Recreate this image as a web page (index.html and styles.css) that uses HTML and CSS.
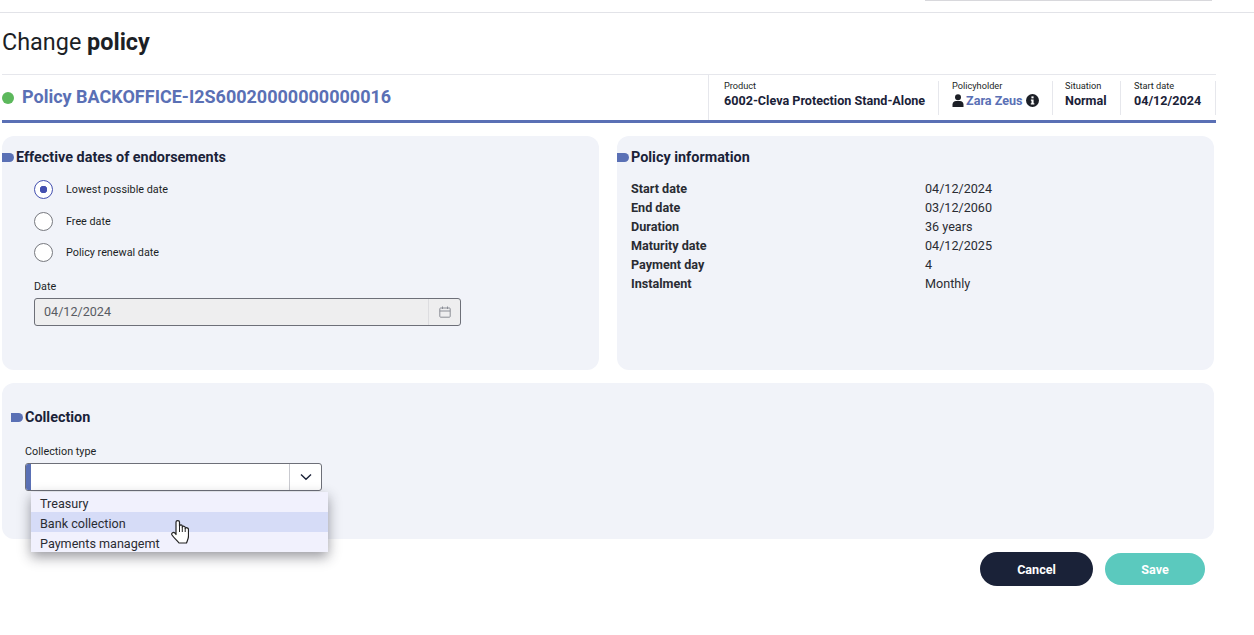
FILE: index.html
```html
<!DOCTYPE html>
<html>

<head>
	<meta charset="utf-8" />
	<title>Change policy</title>
	<link rel="stylesheet" href="styles.css">
</head>

<body>
	<div class="topbar"><div class="topbar-search"></div></div>
	<div class="page">
		<h1 class="title">Change <b>policy</b></h1>

		<div class="summary">
			<div class="summary-name"><span class="dot"></span><span class="name-text">Policy BACKOFFICE-I2S60020000000000016</span></div>
			<div class="summary-cell cell-product">
				<span class="cell-label">Product</span>
				<span class="cell-value">6002-Cleva Protection Stand-Alone</span>
			</div>
			<div class="summary-cell cell-holder">
				<span class="cell-label">Policyholder</span>
				<span class="cell-value holder">
					<svg class="icon-user" viewBox="0 0 12 13" width="12" height="13"><circle cx="6" cy="3.2" r="3" fill="#1c1f26"/><path d="M0.5 13V10.5C0.5 8.3 2.2 7 4 7H8C9.8 7 11.5 8.3 11.5 10.5V13Z" fill="#1c1f26"/></svg>
					<span class="holder-name">Zara Zeus</span>
					<svg class="icon-info" viewBox="0 0 12 12" width="13" height="13"><circle cx="6" cy="6" r="6" fill="#1c1f26"/><rect x="5" y="2.2" width="2" height="1.8" fill="#fff"/><path d="M4.5 5H7V8.6H7.7V9.8H4.4V8.6H5.1V6.2H4.5Z" fill="#fff"/></svg>
				</span>
			</div>
			<div class="summary-cell cell-situation">
				<span class="cell-label">Situation</span>
				<span class="cell-value">Normal</span>
			</div>
			<div class="summary-cell cell-start">
				<span class="cell-label">Start date</span>
				<span class="cell-value">04/12/2024</span>
			</div>
		</div>

		<div class="cards">
			<section class="card card-dates">
				<h2 class="card-title"><span class="tag"></span>Effective dates of endorsements</h2>
				<div class="radios">
					<label class="radio-row"><span class="radio radio-on"></span>Lowest possible date</label>
					<label class="radio-row"><span class="radio"></span>Free date</label>
					<label class="radio-row"><span class="radio"></span>Policy renewal date</label>
				</div>
				<div class="field field-date">
					<span class="field-label">Date</span>
					<div class="date-input">
						<span class="date-value">04/12/2024</span>
						<span class="date-btn">
							<svg viewBox="0 0 12 12" width="12" height="12" fill="none" stroke="#8b8e96" stroke-width="1"><rect x="0.8" y="2" width="10.4" height="9.2" rx="0.8"/><path d="M0.8 5H11.2M3.5 0.5V3M8.5 0.5V3"/></svg>
						</span>
					</div>
				</div>
			</section>

			<section class="card card-info">
				<h2 class="card-title"><span class="tag"></span>Policy information</h2>
				<div class="info">
					<b>Start date</b><span>04/12/2024</span>
					<b>End date</b><span>03/12/2060</span>
					<b>Duration</b><span>36 years</span>
					<b>Maturity date</b><span>04/12/2025</span>
					<b>Payment day</b><span>4</span>
					<b>Instalment</b><span>Monthly</span>
				</div>
			</section>
		</div>

		<section class="card card-collection">
			<h2 class="card-title title-collection"><span class="tag"></span>Collection</h2>
			<div class="field field-collection">
				<span class="field-label">Collection type</span>
				<div class="select">
					<span class="select-bar"></span>
					<span class="select-value"></span>
					<span class="select-btn">
						<svg viewBox="0 0 12 8" width="12" height="8" fill="none" stroke="#1a2238" stroke-width="1.4"><path d="M1 1.5L6 6.2L11 1.5"/></svg>
					</span>
				</div>
				<ul class="menu">
					<li>Treasury</li>
					<li class="menu-hover">Bank collection</li>
					<li>Payments managemt</li>
				</ul>
				<svg class="cursor" viewBox="0 0 18 24" width="18" height="24"><path d="M5 2C5 0.2 8.5 0.2 8.5 2V6C9 4.6 11.2 4.6 11.3 6V7C12 5.8 14 6 14.2 7.5V8.5C15 7.2 17.5 7.6 17.5 9.5V16C17.5 19 16 21 15.5 23H8C6 20.5 3 18 1 15C0 13 2.5 11.5 4 13.2L5 14.5Z" fill="#fff" stroke="#222" stroke-width="1.2" stroke-linejoin="round"/><path d="M8.5 6V12M11.3 7V12M14.2 8.5V12" stroke="#222" stroke-width="1" fill="none"/></svg>
			</div>
		</section>

		<div class="actions">
			<button class="btn btn-cancel" type="button">Cancel</button>
			<button class="btn btn-save" type="button">Save</button>
		</div>
	</div>
</body>

</html>
```

FILE: styles.css
```css
* {
	box-sizing:border-box;
}

body {
	margin:0;
	font-family:Roboto, "Liberation Sans", sans-serif;
	background-color:#fff;
	color:#1a2238;
}

.topbar {
	height:13px;
	border-bottom:1px solid #e2e3e8;
}

.topbar-search {
	width:287px;
	height:1px;
	margin-left:925px;
	background-color:#d8d8dc;
}

.page {
	width:1216px;
	padding-left:2px;
}

.title {
	margin:0;
	padding-top:15px;
	height:61px;
	font-size:23.4px;
	line-height:29px;
	font-weight:400;
	color:#1c1f26;
}

.title b {
	font-weight:700;
}

/* policy strip */
.summary {
	display:flex;
	align-items:stretch;
	width:1214px;
	height:49px;
	border-top:1px solid #e6e7ec;
	border-bottom:3px solid #5a70b5;
}

.summary-name {
	flex:1;
	display:flex;
	align-items:center;
	font-size:18px;
	font-weight:700;
	color:#5a70b5;
}

.name-text {
	margin-bottom:2px;
}

.dot {
	width:12px;
	height:12px;
	margin-right:8px;
	border-radius:50%;
	background-color:#5cb85c;
}

.summary-cell {
	display:flex;
	flex-direction:column;
	padding-left:15px;
	padding-top:5px;
	border-left:1px solid #e6e7ec;
}

.cell-product {
	width:230px;
	height:45px;
}

.cell-holder {
	width:114px;
	margin-top:6px;
	height:34px;
	padding-left:13px;
	padding-top:0;
}

.cell-situation {
	width:68px;
	margin-top:6px;
	height:34px;
	padding-left:12px;
	padding-top:0;
}

.cell-start {
	width:96px;
	margin-top:6px;
	height:34px;
	padding-left:13px;
	padding-top:0;
	border-right:1px solid #e6e7ec;
}

.cell-label {
	font-size:9.2px;
	line-height:12px;
	color:#1c1f26;
}

.cell-holder .cell-label,
.cell-situation .cell-label,
.cell-start .cell-label {
	margin-top:-1px;
}

.cell-value {
	margin-top:1px;
	font-size:12.6px;
	line-height:15px;
	font-weight:700;
	white-space:nowrap;
}

.holder {
	display:flex;
	align-items:center;
}

.holder-name {
	margin:0 3px 0 2px;
	color:#5a70b5;
}

.cards {
	display:flex;
	gap:18px;
	margin-top:13px;
	width:1212px;
}

.card {
	background-color:#f1f3f9;
	border-radius:12px;
}

.card-dates,
.card-info {
	flex:1;
	height:234px;
}

.card-title {
	display:flex;
	align-items:center;
	margin:0;
	padding-top:13px;
	font-size:14.4px;
	line-height:17px;
	font-weight:700;
}

.tag {
	width:12px;
	height:9px;
	margin-right:2px;
	border-radius:0 4.5px 4.5px 0;
	background-color:#5a70b5;
}

.radios {
	display:flex;
	flex-direction:column;
	margin-top:8px;
	padding-left:32px;
}

.radio-row {
	display:flex;
	align-items:center;
	height:31.5px;
	font-size:10.8px;
	color:#1c1f26;
}

.radio {
	width:19px;
	height:19px;
	margin-right:13px;
	border:1px solid #77797f;
	border-radius:50%;
	background-color:#fff;
}

.radio-on {
	border-color:#4450b0;
	background:radial-gradient(circle, #4450b0 0 3.5px, #fff 4px);
}

.field-date {
	margin:11px 0 0 32px;
	width:427px;
}

.field-label {
	display:block;
	font-size:10.8px;
	line-height:13px;
	color:#1c1f26;
}

.date-input {
	display:flex;
	align-items:center;
	height:28px;
	margin-top:5px;
	border:1px solid #6d6f78;
	border-radius:3px;
	background-color:#eeeeef;
}

.date-value {
	flex:1;
	padding-left:9px;
	font-size:12.6px;
	color:#585b63;
}

.date-btn {
	display:flex;
	align-items:center;
	justify-content:center;
	width:32px;
	height:100%;
	border-left:1px solid #dddde0;
}

.info {
	display:grid;
	grid-template-columns:294px 1fr;
	grid-auto-rows:19px;
	margin-top:13px;
	padding-left:14px;
	font-size:12.6px;
	line-height:19px;
	color:#2a2c33;
}

.card-collection {
	width:1212px;
	height:156px;
	margin-top:13px;
}

.title-collection {
	padding-top:26px;
	padding-left:9px;
}

.field-collection {
	position:relative;
	width:297px;
	margin:19px 0 0 23px;
}

.select {
	display:flex;
	height:28px;
	margin-top:5px;
	border:1px solid #6d6f78;
	border-radius:3px;
	background-color:#fff;
	overflow:hidden;
}

.select-bar {
	width:6px;
	margin:-1px 0 -1px -1px;
	background-color:#5a70b5;
}

.select-value {
	flex:1;
}

.select-btn {
	display:flex;
	align-items:center;
	justify-content:center;
	width:32px;
	border-left:1px solid #c9cad0;
}

.menu {
	position:absolute;
	left:6px;
	top:47px;
	width:297px;
	margin:0;
	padding:0;
	list-style:none;
	background-color:#f1f1fd;
	box-shadow:0 5px 12px rgba(30, 32, 45, 0.45);
	font-size:12.6px;
	color:#2a2c33;
}

.menu li {
	height:20px;
	padding-left:9px;
	line-height:23px;
}

.menu .menu-hover {
	background-color:#d6dcf7;
}

.cursor {
	position:absolute;
	left:146px;
	top:75px;
}

.actions {
	display:flex;
	justify-content:flex-end;
	align-items:center;
	gap:12px;
	width:1203px;
	margin-top:13px;
}

.btn {
	border:0;
	border-radius:17px;
	color:#fff;
	font-family:inherit;
	font-size:12.6px;
	font-weight:700;
}

.btn-cancel {
	width:113px;
	height:34px;
	background-color:#1a2238;
}

.btn-save {
	width:100px;
	height:32px;
	background-color:#5bc9be;
}
```
